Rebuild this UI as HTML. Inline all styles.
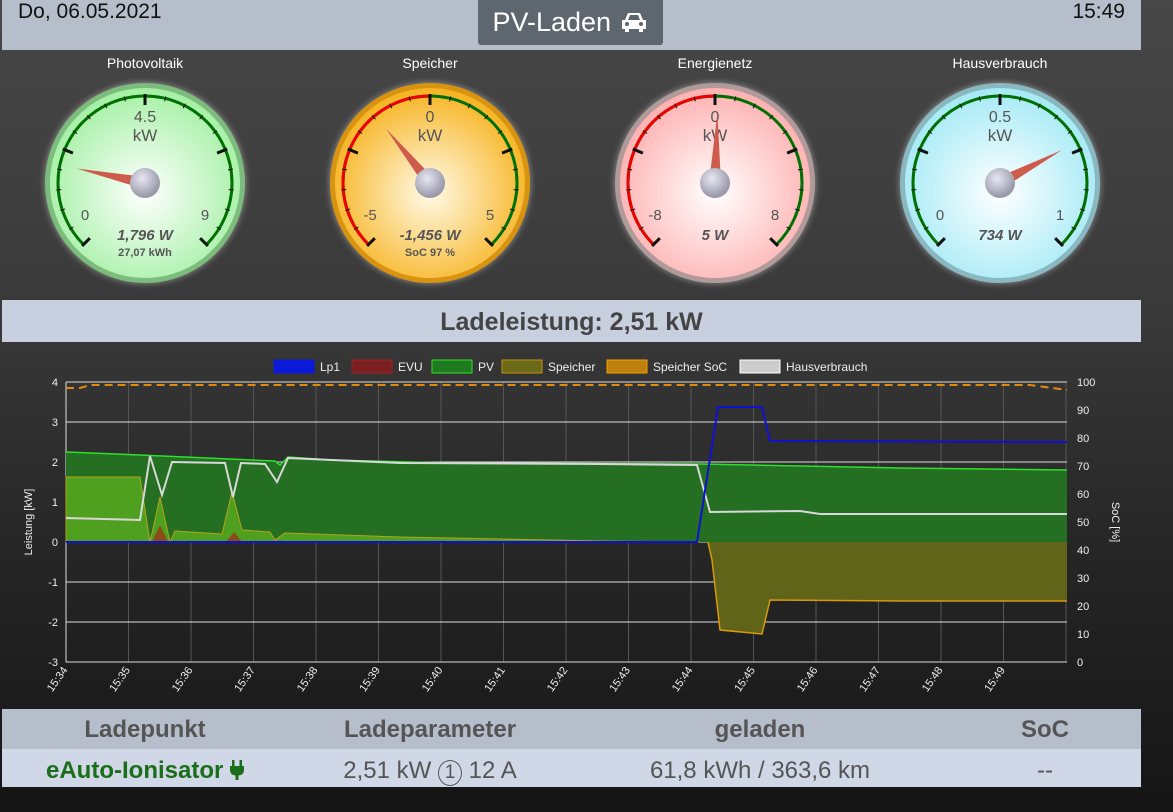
<!DOCTYPE html>
<html><head><meta charset="utf-8"><style>
body{margin:0;width:1173px;height:812px;overflow:hidden;background:linear-gradient(#474747 0px,#3a3a3a 300px,#262626 550px,#151515 812px);font-family:"Liberation Sans",sans-serif;position:relative}
.hdr{position:absolute;left:2px;top:0;width:1139px;height:50px;background:#b6bdcb}
.date{position:absolute;left:16px;top:0;font-size:21px;color:#111}
.time{position:absolute;right:16px;top:0;font-size:21px;color:#111}
.title{position:absolute;left:478px;top:0;width:185px;height:45px;background:#5e6670;border-radius:0 0 3px 3px;color:#fff;font-size:27px;line-height:44px;text-align:center}
.gl{position:absolute;top:55px;width:200px;text-align:center;color:#fff;font-size:14px}
.ll{position:absolute;left:2px;top:300px;width:1139px;height:42px;background:#c8cfde;text-align:center;font-size:25px;font-weight:bold;color:#444;line-height:44px}
.th{position:absolute;left:2px;top:709px;width:1139px;height:40px;background:#b6bdcb}
.tr{position:absolute;left:2px;top:749px;width:1139px;height:38px;background:#d0d7e6}
.c{position:absolute;text-align:center;font-size:24px;color:#555;white-space:nowrap}
</style></head><body>
<div class="hdr"><div class="date">Do, 06.05.2021</div><div class="time">15:49</div></div>
<div class="title">PV-Laden <svg width="30" height="22" viewBox="0 0 30 22" style="vertical-align:-2px"><path d="M6 9 L9 2 H21 L24 9 H27 V18 H24 V21 H20 V18 H10 V21 H6 V18 H3 V9Z" fill="#fff"/><path d="M9 9 L11 4 H19 L21 9Z" fill="#5e6670"/><circle cx="8" cy="13" r="2" fill="#5e6670"/><circle cx="22" cy="13" r="2" fill="#5e6670"/></svg></div>
<div class="gl" style="left:45px">Photovoltaik</div>
<div class="gl" style="left:330px">Speicher</div>
<div class="gl" style="left:615px">Energienetz</div>
<div class="gl" style="left:900px">Hausverbrauch</div>
<svg id="g" width="1173" height="300" style="position:absolute;left:0;top:0"></svg>
<div class="ll">Ladeleistung: 2,51 kW</div>
<svg id="ch" width="1173" height="360" style="position:absolute;left:0;top:345px"></svg>
<div class="th"></div><div class="tr"></div>
<div class="c" style="left:40px;width:210px;top:716px;font-weight:bold">Ladepunkt</div>
<div class="c" style="left:320px;width:220px;top:716px;font-weight:bold">Ladeparameter</div>
<div class="c" style="left:660px;width:200px;top:716px;font-weight:bold">geladen</div>
<div class="c" style="left:980px;width:130px;top:716px;font-weight:bold">SoC</div>
<div class="c" style="left:20px;width:250px;top:757px;font-weight:bold;color:#1a6e1a">eAuto-Ionisator <svg width="14" height="20" viewBox="0 0 14 20" style="vertical-align:-2px"><rect x="2" y="0" width="2.5" height="6" fill="#1a6e1a"/><rect x="9.5" y="0" width="2.5" height="6" fill="#1a6e1a"/><path d="M0 6 H14 V10 Q14 15 8.5 15.5 V20 H5.5 V15.5 Q0 15 0 10Z" fill="#1a6e1a"/></svg></div>
<div class="c" style="left:320px;width:220px;top:757px">2,51 kW <span style="display:inline-block;width:22px;height:24px;border:1px solid #555;border-radius:50%;font-size:19px;line-height:24px">1</span> 12 A</div>
<div class="c" style="left:620px;width:280px;top:757px">61,8 kWh / 363,6 km</div>
<div class="c" style="left:980px;width:130px;top:757px">--</div>
<script>
let g='<defs><filter id="gl" x="-20%" y="-20%" width="140%" height="140%"><feGaussianBlur stdDeviation="3"/></filter>';
const faces=[['#ffffff','#a4f0a4','#7cbc7c'],['#fffbe8','#f7b320','#d89410'],['#ffffff','#ffb0b0','#b09a9a'],['#ffffff','#a4eaf6','#8ab8c0']];
faces.forEach((f,i)=>{g+=`<radialGradient id="f${i}" cx="50%" cy="55%" r="55%"><stop offset="0" stop-color="${f[0]}"/><stop offset="1" stop-color="${f[1]}"/></radialGradient>`});
g+='<radialGradient id="hub" cx="40%" cy="35%" r="60%"><stop offset="0" stop-color="#e8e8f4"/><stop offset="1" stop-color="#9a9aaa"/></radialGradient></defs>';
const G=[{cx:145,lab:['0','4.5','9'],n:-78,r:null,t:'1,796 W',s:'27,07 kWh'},
{cx:430,lab:['-5','0','5'],n:-39,r:[-135,0],t:'-1,456 W',s:'SoC 97 %'},
{cx:715,lab:['-8','0','8'],n:2,r:[-135,0],t:'5 W',s:''},
{cx:1000,lab:['0','0.5','1'],n:62,r:null,t:'734 W',s:''}];
const cy=183;
function P(cx,a,r){let t=(a-90)*Math.PI/180;return [cx+r*Math.cos(t),cy+r*Math.sin(t)]}
function arc(cx,a1,a2,r){let p=P(cx,a1,r),q=P(cx,a2,r);return `M${p[0]} ${p[1]} A${r} ${r} 0 ${a2-a1>180?1:0} 1 ${q[0]} ${q[1]}`}
G.forEach((o,i)=>{let cx=o.cx;
g+=`<circle cx="${cx}" cy="${cy}" r="101" fill="rgba(255,255,255,0.35)" filter="url(#gl)"/>`;
g+=`<circle cx="${cx}" cy="${cy}" r="100" fill="${faces[i][2]}"/><circle cx="${cx}" cy="${cy}" r="95" fill="url(#f${i})"/>`;
g+=`<path d="${arc(cx,-135,135,87)}" fill="none" stroke="#007000" stroke-width="3"/>`;
if(o.r)g+=`<path d="${arc(cx,-135,0,87)}" fill="none" stroke="#ee0000" stroke-width="3"/>`;
for(let k=0;k<=20;k++){let a=-135+k*13.5;let big=k%5==0;let p=P(cx,a,89),q=P(cx,a,big?78:84);g+=`<line x1="${p[0]}" y1="${p[1]}" x2="${q[0]}" y2="${q[1]}" stroke="#111" stroke-width="${big?3:1}"/>`}
g+=`<text x="${cx-60}" y="220" font-size="15" fill="#555" text-anchor="middle">${o.lab[0]}</text><text x="${cx+60}" y="220" font-size="15" fill="#555" text-anchor="middle">${o.lab[2]}</text>`;
g+=`<text x="${cx}" y="122" font-size="16" fill="#555" text-anchor="middle">${o.lab[1]}</text><text x="${cx}" y="141" font-size="17" fill="#555" text-anchor="middle">kW</text>`;
let tip=P(cx,o.n,70),l=P(cx,o.n-90,6),rr=P(cx,o.n+90,6);
g+=`<polygon points="${tip[0]},${tip[1]} ${l[0]},${l[1]} ${rr[0]},${rr[1]}" fill="#cd5c4c"/><circle cx="${cx}" cy="${cy}" r="15" fill="url(#hub)"/>`;
g+=`<text x="${cx}" y="240" font-size="15" font-weight="bold" font-style="italic" fill="#555" text-anchor="middle">${o.t}</text>`;
if(o.s)g+=`<text x="${cx}" y="256" font-size="11" font-weight="bold" fill="#555" text-anchor="middle">${o.s}</text>`;
});
document.getElementById('g').innerHTML=g;
const oy=345;let c='';
const X0=66,X1=1067,Y=v=>542-v*40-oy,xm=m=>66+m*62.5;
for(let m=0;m<=16;m++){let x=xm(m);if(x<=X1)c+=`<line x1="${x}" y1="${382-oy}" x2="${x}" y2="${662-oy}" stroke="#555" stroke-width="1"/>`}
for(let v=-3;v<=4;v++)c+=`<line x1="${X0}" y1="${Y(v)}" x2="${X1}" y2="${Y(v)}" stroke="#ddd" stroke-width="1"/><text x="${X0-8}" y="${Y(v)+4}" font-size="11" fill="#eee" text-anchor="end">${v}</text>`;
c+=`<line x1="${X0}" y1="${382-oy}" x2="${X0}" y2="${662-oy}" stroke="#ddd"/>`;
for(let s=0;s<=100;s+=10)c+=`<text x="1077" y="${662-s*2.8-oy+4}" font-size="11" fill="#eee">${s}</text>`;
const z=Y(0);
const pv=[[66,452],[140,455],[275,461],[280,465],[288,457],[330,460],[450,463],[700,464],[900,468],[1067,470]].map(p=>[p[0],p[1]-oy]);
c+=`<polygon points="66,${z} ${pv.map(p=>p.join(',')).join(' ')} 1067,${z}" fill="#246f22"/><polyline points="${pv.map(p=>p.join(',')).join(' ')}" fill="none" stroke="#2de02d" stroke-width="1.5"/>`;
const sp=[[66,477],[140,477],[150,542],[160,497],[170,542],[175,531],[222,534],[232,492],[242,530],[270,532],[275,540],[285,533],[400,537],[600,541],[700,542]].map(p=>[p[0],p[1]-oy]);
c+=`<polygon points="66,${z} ${sp.map(p=>p.join(',')).join(' ')}" fill="#4fa01f" stroke="#b8a020" stroke-width="1"/>`;
c+=`<polygon points="152,${z} 160,${525-oy} 168,${z}" fill="#8a4a1a"/><polygon points="226,${z} 234,${532-oy} 242,${z}" fill="#8a4a1a"/>`;
const sn=[[708,542],[712,560],[720,630],[762,634],[770,600],[900,601],[1067,601]].map(p=>[p[0],p[1]-oy]);
c+=`<polygon points="${sn.map(p=>p.join(',')).join(' ')} 1067,${z}" fill="#5f6418"/><polyline points="${sn.map(p=>p.join(',')).join(' ')}" fill="none" stroke="#d69a10" stroke-width="1.5"/>`;
const hv=[[66,518],[140,520],[150,456],[162,495],[172,462],[225,463],[233,497],[241,463],[265,464],[277,482],[288,458],[400,463],[600,464],[697,465],[710,512],[800,511],[820,514],[1067,514]].map(p=>[p[0],p[1]-oy]);
c+=`<polyline points="${hv.map(p=>p.join(',')).join(' ')}" fill="none" stroke="#d8d8d8" stroke-width="2"/>`;
c+=`<polyline points="66,${z} 697,${z} 718,${407-oy} 762,${407-oy} 770,${441-oy} 1067,${442-oy}" fill="none" stroke="#1010d0" stroke-width="2"/>`;
c+=`<polyline points="66,${388-oy} 80,${388-oy} 90,${385-oy} 1030,${385-oy} 1067,${390-oy}" fill="none" stroke="#e08a10" stroke-width="2" stroke-dasharray="8,5"/>`;
for(let m=0;m<=15;m++){let x=xm(m);c+=`<text transform="translate(${x+2},${670-oy}) rotate(-55)" font-size="11" fill="#eee" text-anchor="end">15:${34+m}</text>`}
c+=`<text transform="translate(32,${522-oy}) rotate(-90)" font-size="11" fill="#eee" text-anchor="middle">Leistung [kW]</text>`;
c+=`<text transform="translate(1112,${522-oy}) rotate(90)" font-size="11" fill="#eee" text-anchor="middle">SoC [%]</text>`;
const L=[[274,'#0a1ad8','#0a1ad8','Lp1'],[352,'#7a2020','#a02020','EVU'],[432,'#1f7a1f','#2de02d','PV'],[502,'#6a6a18','#c89010','Speicher'],[607,'#c08010','#f0a000','Speicher SoC'],[740,'#ccc','#fff','Hausverbrauch']];
L.forEach(l=>{c+=`<rect x="${l[0]}" y="${360-oy}" width="40" height="13" fill="${l[1]}" stroke="${l[2]}"/><text x="${l[0]+46}" y="${371-oy}" font-size="12" fill="#eee">${l[3]}</text>`});
document.getElementById('ch').innerHTML=c;
</script>
</body></html>
